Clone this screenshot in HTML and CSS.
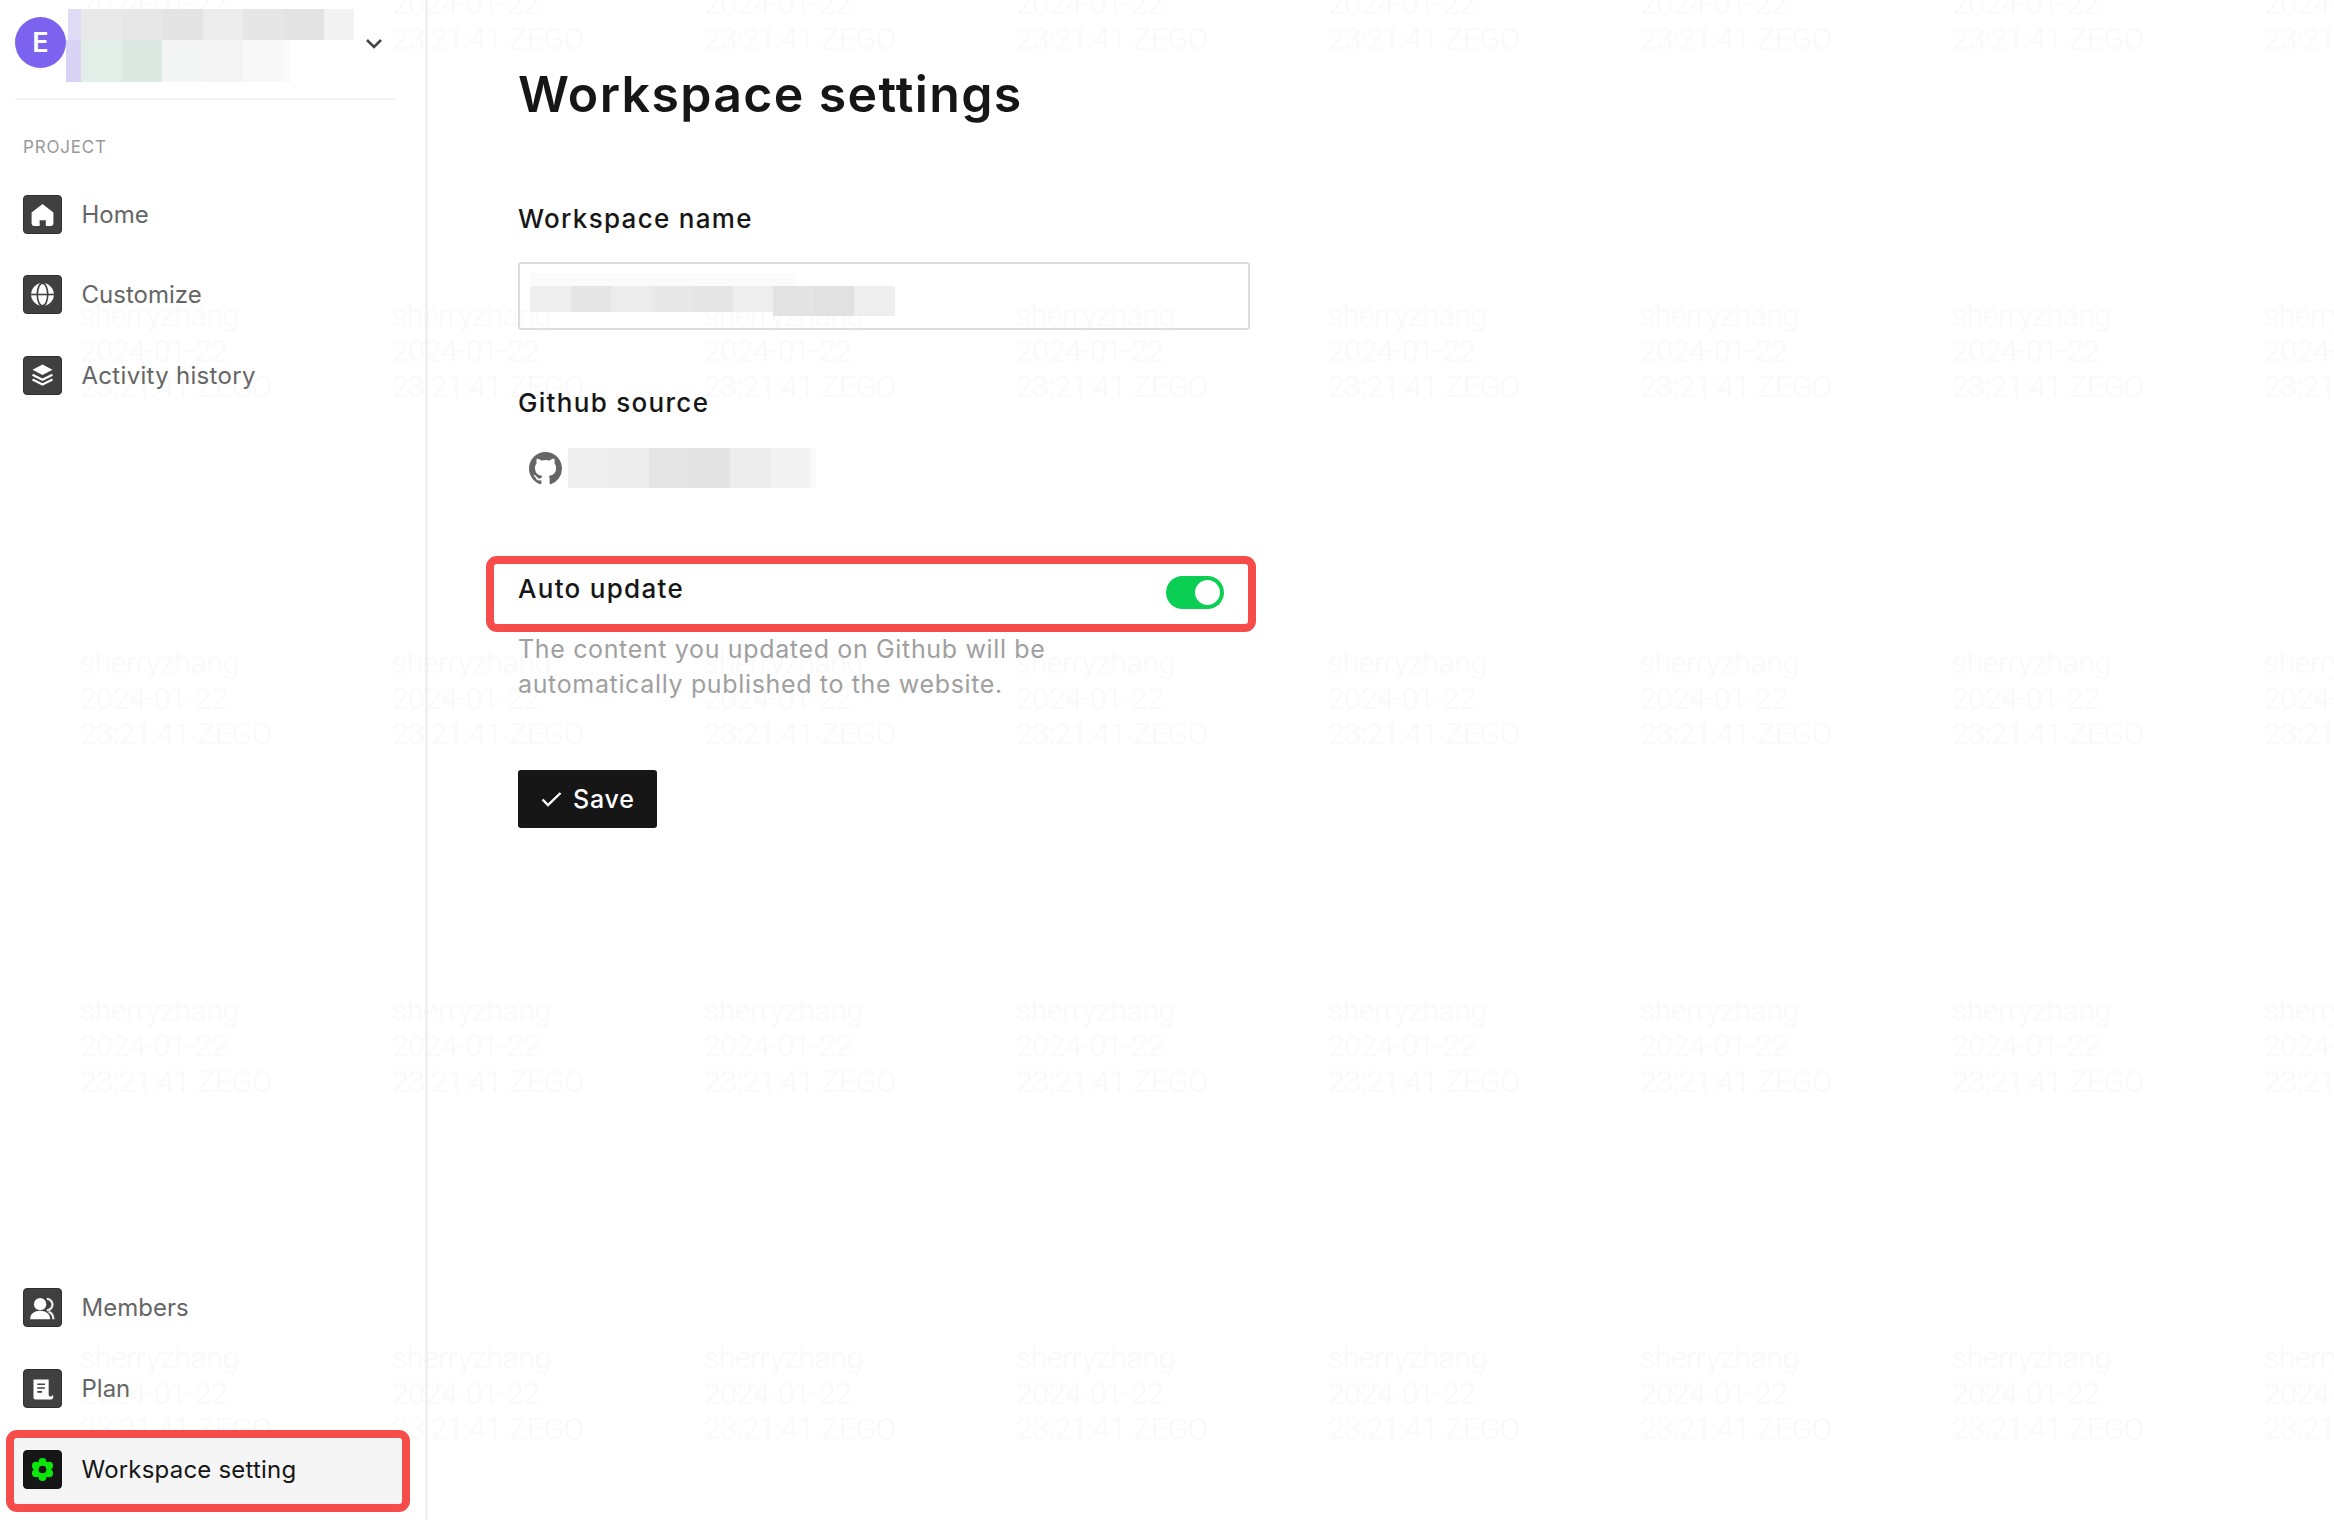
FILE: index.html
```html
<!DOCTYPE html>
<html lang="en">
<head>
<meta charset="utf-8">
<title>Workspace settings</title>
<link rel="stylesheet" href="styles.css">
</head>
<body>
<div class="watermark" aria-hidden="true">
  <div class="wm-grid">
  <div class="wm">sherryzhang<br>2024-01-22<br>23:21:41 ZEGO</div><div class="wm">sherryzhang<br>2024-01-22<br>23:21:41 ZEGO</div><div class="wm">sherryzhang<br>2024-01-22<br>23:21:41 ZEGO</div><div class="wm">sherryzhang<br>2024-01-22<br>23:21:41 ZEGO</div><div class="wm">sherryzhang<br>2024-01-22<br>23:21:41 ZEGO</div><div class="wm">sherryzhang<br>2024-01-22<br>23:21:41 ZEGO</div><div class="wm">sherryzhang<br>2024-01-22<br>23:21:41 ZEGO</div><div class="wm">sherryzhang<br>2024-01-22<br>23:21:41 ZEGO</div>
  <div class="wm">sherryzhang<br>2024-01-22<br>23:21:41 ZEGO</div><div class="wm">sherryzhang<br>2024-01-22<br>23:21:41 ZEGO</div><div class="wm">sherryzhang<br>2024-01-22<br>23:21:41 ZEGO</div><div class="wm">sherryzhang<br>2024-01-22<br>23:21:41 ZEGO</div><div class="wm">sherryzhang<br>2024-01-22<br>23:21:41 ZEGO</div><div class="wm">sherryzhang<br>2024-01-22<br>23:21:41 ZEGO</div><div class="wm">sherryzhang<br>2024-01-22<br>23:21:41 ZEGO</div><div class="wm">sherryzhang<br>2024-01-22<br>23:21:41 ZEGO</div>
  <div class="wm">sherryzhang<br>2024-01-22<br>23:21:41 ZEGO</div><div class="wm">sherryzhang<br>2024-01-22<br>23:21:41 ZEGO</div><div class="wm">sherryzhang<br>2024-01-22<br>23:21:41 ZEGO</div><div class="wm">sherryzhang<br>2024-01-22<br>23:21:41 ZEGO</div><div class="wm">sherryzhang<br>2024-01-22<br>23:21:41 ZEGO</div><div class="wm">sherryzhang<br>2024-01-22<br>23:21:41 ZEGO</div><div class="wm">sherryzhang<br>2024-01-22<br>23:21:41 ZEGO</div><div class="wm">sherryzhang<br>2024-01-22<br>23:21:41 ZEGO</div>
  <div class="wm">sherryzhang<br>2024-01-22<br>23:21:41 ZEGO</div><div class="wm">sherryzhang<br>2024-01-22<br>23:21:41 ZEGO</div><div class="wm">sherryzhang<br>2024-01-22<br>23:21:41 ZEGO</div><div class="wm">sherryzhang<br>2024-01-22<br>23:21:41 ZEGO</div><div class="wm">sherryzhang<br>2024-01-22<br>23:21:41 ZEGO</div><div class="wm">sherryzhang<br>2024-01-22<br>23:21:41 ZEGO</div><div class="wm">sherryzhang<br>2024-01-22<br>23:21:41 ZEGO</div><div class="wm">sherryzhang<br>2024-01-22<br>23:21:41 ZEGO</div>
  <div class="wm">sherryzhang<br>2024-01-22<br>23:21:41 ZEGO</div><div class="wm">sherryzhang<br>2024-01-22<br>23:21:41 ZEGO</div><div class="wm">sherryzhang<br>2024-01-22<br>23:21:41 ZEGO</div><div class="wm">sherryzhang<br>2024-01-22<br>23:21:41 ZEGO</div><div class="wm">sherryzhang<br>2024-01-22<br>23:21:41 ZEGO</div><div class="wm">sherryzhang<br>2024-01-22<br>23:21:41 ZEGO</div><div class="wm">sherryzhang<br>2024-01-22<br>23:21:41 ZEGO</div><div class="wm">sherryzhang<br>2024-01-22<br>23:21:41 ZEGO</div>
  </div>
</div>

<aside class="sidebar">
  <header class="org">
    <span class="avatar">E</span>
    <div class="mosaic org-mosaic">
      <div class="mrow org-row1">
        <i class="cell narrow c-lav1"></i><i class="cell c-e9"></i><i class="cell c-e7"></i><i class="cell c-e4"></i><i class="cell c-ec"></i><i class="cell c-e6"></i><i class="cell c-e3"></i><i class="cell short c-f3"></i>
      </div>
      <div class="mrow org-row2">
        <i class="cell narrow2 c-lav2"></i><i class="cell c-g1"></i><i class="cell c-g2"></i><i class="cell c-g3"></i><i class="cell c-f4"></i><i class="cell c-f8"></i><i class="cell tiny c-fa"></i>
      </div>
    </div>
    <svg class="chevron" viewBox="0 0 18 12"><polyline points="2,2 9,9 16,2"/></svg>
  </header>
  <div class="section-label">PROJECT</div>
  <nav class="nav">
    <a class="nav-item">
      <span class="icon"><svg viewBox="0 0 39 39"><path class="w" d="M19.5 8.5 L31 17.5 V29 a2.5 2.5 0 0 1 -2.5 2.5 H23 V25.5 H16.5 V31.5 H10.5 a2.5 2.5 0 0 1 -2.5 -2.5 V17.5 Z"/></svg></span>
      <span>Home</span>
    </a>
    <a class="nav-item">
      <span class="icon"><svg viewBox="0 0 39 39"><circle class="w" cx="19.5" cy="19.5" r="12"/><ellipse class="d" cx="19.5" cy="19.5" rx="5.5" ry="12"/><path class="d" d="M7.5 19.5 H31.5"/></svg></span>
      <span>Customize</span>
    </a>
    <a class="nav-item">
      <span class="icon"><svg viewBox="0 0 39 39"><path class="w" d="M19.5 8 L30 13.5 L19.5 19 L9 13.5 Z"/><polyline class="l" points="9,18.7 19.5,24 30,18.7"/><polyline class="l" points="9,23.7 19.5,29 30,23.7"/></svg></span>
      <span class="tracked">Activity history</span>
    </a>
  </nav>
  <nav class="nav nav-bottom">
    <a class="nav-item">
      <span class="icon"><svg viewBox="0 0 39 39"><path class="l2" d="M24 10.5 a6 6 0 0 1 0 12 M26 24 c3 1.2 5 4 5 8"/><circle class="w" cx="17" cy="16" r="6.5"/><path class="w" d="M6.5 32 c0 -6 4.5 -9 10.5 -9 s10.5 3 10.5 9 Z"/></svg></span>
      <span>Members</span>
    </a>
    <a class="nav-item">
      <span class="icon"><svg viewBox="0 0 39 39"><path class="w" d="M10 10 H26 V26 a2 2 0 0 0 4 0 a3 3 0 0 1 -1 5 H12 a2 2 0 0 1 -2 -2 Z"/><path class="d" d="M14 15 H22 M14 19 H22 M14 23 H19"/></svg></span>
      <span>Plan</span>
    </a>
    <a class="nav-item nav-active">
      <span class="icon icon-active"><svg viewBox="0 0 39 39"><g class="gear"><circle cx="19.5" cy="19.5" r="9"/><circle cx="19.5" cy="11.5" r="4.2"/><circle cx="19.5" cy="27.5" r="4.2"/><circle cx="12.6" cy="15.5" r="4.2"/><circle cx="26.4" cy="15.5" r="4.2"/><circle cx="12.6" cy="23.5" r="4.2"/><circle cx="26.4" cy="23.5" r="4.2"/></g><circle class="hole" cx="19.5" cy="19.5" r="4"/></svg></span>
      <span>Workspace setting</span>
    </a>
  </nav>
</aside>

<main class="main">
  <h1 class="title">Workspace settings</h1>
  <div class="label label-name">Workspace name</div>
  <div class="input">
    <div class="mrow input-row1"><i class="input-faint"></i></div>
    <div class="mosaic mrow input-row2">
      <i class="cell c-ef"></i><i class="cell c-e6"></i><i class="cell c-ec"></i><i class="cell c-e8"></i><i class="cell c-e5"></i><i class="cell c-ee"></i><i class="cell tall c-e3"></i><i class="cell tall c-e1"></i><i class="cell tall c-ee"></i>
    </div>
  </div>
  <div class="label label-source">Github source</div>
  <div class="source">
    <svg class="github" viewBox="0 0 16 16"><path d="M8 0C3.58 0 0 3.58 0 8c0 3.54 2.29 6.53 5.47 7.59.4.07.55-.17.55-.38 0-.19-.01-.82-.01-1.49-2.01.37-2.53-.49-2.69-.94-.09-.23-.48-.94-.82-1.13-.28-.15-.68-.52-.01-.53.63-.01 1.08.58 1.23.82.72 1.21 1.87.87 2.33.66.07-.52.28-.87.51-1.07-1.78-.2-3.64-.89-3.64-3.95 0-.87.31-1.59.82-2.15-.08-.2-.36-1.02.08-2.12 0 0 .67-.21 2.2.82.64-.18 1.32-.27 2-.27s1.36.09 2 .27c1.53-1.04 2.2-.82 2.2-.82.44 1.1.16 1.92.08 2.12.51.56.82 1.27.82 2.15 0 3.07-1.87 3.75-3.65 3.95.29.25.54.73.54 1.48 0 1.07-.01 1.93-.01 2.2 0 .21.15.46.55.38A8.01 8.01 0 0 0 16 8c0-4.42-3.58-8-8-8z"/></svg>
    <div class="mosaic mrow source-row">
      <i class="cell c-ee"></i><i class="cell c-ed"></i><i class="cell c-e5"></i><i class="cell c-e4"></i><i class="cell c-ec"></i><i class="cell c-f3"></i><i class="cell sliver c-fa"></i>
    </div>
  </div>
  <div class="auto-box">
    <span class="label">Auto update</span>
    <span class="toggle"><span class="knob"></span></span>
  </div>
  <p class="desc">The content you updated on Github will be<br>automatically published to the website.</p>
  <button class="save" type="button">
    <svg class="check" viewBox="0 0 21 16"><polyline points="1.5,8.5 7,14 19.5,2"/></svg>
    <span>Save</span>
  </button>
</main>
</body>
</html>
```
FILE: styles.css
```css
* { box-sizing: border-box; }
html, body { margin: 0; height: 100%; }
body {
  position: relative;
  display: flex;
  width: 2334px;
  height: 1520px;
  overflow: hidden;
  background: #fff;
  color: #161616;
  font-family: Inter, "Noto Sans", sans-serif;
}

/* Sidebar */
.sidebar {
  position: relative;
  display: flex;
  flex-direction: column;
  flex: 0 0 428px;
  height: 100%;
  padding-bottom: 8px;
  border-right: 3px solid #f1f1f1;
}
.org {
  display: flex;
  align-items: flex-start;
  height: 100px;
  margin: 0 30px 0 15px;
  border-bottom: 2px solid #f3f3f3;
}
.avatar {
  display: flex;
  align-items: center;
  justify-content: center;
  flex: 0 0 51px;
  height: 51px;
  margin-top: 17px;
  border-radius: 50%;
  background: #7b63ef;
  color: #fff;
  font-size: 27px;
  font-weight: 600;
}
.org-mosaic { margin-top: 9px; }
.chevron {
  width: 18px;
  height: 12px;
  margin: 38px 12px 0 auto;
  fill: none;
  stroke: #444;
  stroke-width: 2.6;
}
.mosaic { filter: blur(0.7px); }
.mrow { display: flex; }
.cell { display: block; flex: 0 0 40.5px; }
.org-row1 { height: 31px; margin-left: 2px; }
.org-row2 { height: 42px; }
.narrow { flex-basis: 13px; }
.narrow2 { flex-basis: 15px; }
.short { flex-basis: 30px; }
.tiny { flex-basis: 7px; }
.sliver { flex-basis: 5px; }
.c-lav1 { background: #e0dcf8; }
.c-lav2 { background: #d9d4f6; }
.c-g1 { background: #e4eee8; }
.c-g2 { background: #dce9e2; }
.c-g3 { background: #f3f6f4; }
.c-e1 { background: #e1e1e1; }
.c-e3 { background: #e3e3e3; }
.c-e4 { background: #e4e4e4; }
.c-e5 { background: #e5e5e5; }
.c-e6 { background: #e6e6e6; }
.c-e7 { background: #e7e7e7; }
.c-e8 { background: #e8e8e8; }
.c-e9 { background: #e9e9e9; }
.c-ec { background: #ececec; }
.c-ed { background: #ededed; }
.c-ee { background: #eeeeee; }
.c-ef { background: #efefef; }
.c-f3 { background: #f3f3f3; }
.c-f4 { background: #f4f4f4; }
.c-f8 { background: #f8f8f8; }
.c-fa { background: #fafafa; }

.section-label {
  margin: 37px 0 17px 23px;
  color: #999;
  font-size: 17px;
  line-height: 20px;
  letter-spacing: 0.8px;
}
.nav { display: flex; flex-direction: column; }
.nav-bottom { margin-top: auto; }
.nav-item {
  display: flex;
  align-items: center;
  gap: 19.5px;
  height: 80.5px;
  padding-left: 23px;
  color: #666;
  font-size: 24px;
}
.tracked { letter-spacing: 0.3px; }
.nav-active {
  height: 82px;
  margin: 1.5px 15px 0 6px;
  padding: 0 0 4px 9px;
  border: 8px solid #f64c4a;
  border-radius: 11px;
  background: #f5f5f5;
  color: #161616;
  letter-spacing: 0.2px;
}
.icon {
  flex: 0 0 39px;
  height: 39px;
  border: 1px solid #2e2e2e;
  border-radius: 4px;
  background: #404040;
}
.icon svg { display: block; width: 37px; height: 37px; }
.icon-active { background: #161616; border-color: #111; }
.w { fill: #fff; }
.d { fill: none; stroke: #404040; stroke-width: 1.7; }
.l { fill: none; stroke: #fff; stroke-width: 2.2; }
.l2 { fill: none; stroke: #e8e8e8; stroke-width: 2.4; }
.gear { fill: #0be60b; }
.hole { fill: #161616; }

/* Main */
.main { position: relative; flex: 1; padding-left: 90px; }
.title {
  margin: 66px 0 0;
  font-size: 50px;
  line-height: 56px;
  font-weight: 600;
  letter-spacing: 1.35px;
}
.label {
  font-size: 26px;
  line-height: 30px;
  font-weight: 500;
  letter-spacing: 1.3px;
}
.label-name { margin-top: 82px; }
.label-source { margin-top: 58px; }
.input {
  width: 732px;
  height: 68px;
  margin-top: 28px;
  padding: 9px 0 0 10px;
  border: 2px solid #dcdcdc;
  border-radius: 3px;
}
.input-row1 { height: 13px; }
.input-faint { display: block; width: 265px; background: #fbfbfb; }
.input-row2 { height: 26px; align-items: flex-start; }
.input-row2 .cell { height: 26px; }
.input-row2 .tall { height: 30px; }
.source {
  display: flex;
  align-items: center;
  gap: 6px;
  height: 40px;
  margin-top: 30px;
  padding-left: 11px;
}
.github { width: 33px; height: 33px; fill: #666; }
.source-row { height: 40px; }
.auto-box {
  display: flex;
  align-items: flex-start;
  justify-content: space-between;
  width: 770px;
  height: 76px;
  margin: 68px 0 0 -32px;
  padding: 10px 24px 0;
  border: 8px solid #f64c4a;
  border-radius: 11px;
}
.toggle {
  display: flex;
  align-items: center;
  justify-content: flex-end;
  width: 58px;
  height: 33px;
  margin-top: 2px;
  padding-right: 4px;
  border-radius: 17px;
  background: #0bcf52;
}
.knob { width: 25px; height: 25px; border-radius: 50%; background: #fff; }
.desc {
  margin: 0;
  color: #a0a0a0;
  font-size: 25px;
  line-height: 35px;
  letter-spacing: 0.65px;
}
.save {
  display: flex;
  align-items: center;
  gap: 11px;
  width: 139px;
  height: 58px;
  margin-top: 68px;
  padding: 0 0 0 23px;
  border: 0;
  border-radius: 3px;
  background: #161616;
  color: #fff;
  font-family: inherit;
  font-size: 25px;
  font-weight: 500;
  letter-spacing: 0.8px;
}
.check { width: 21px; height: 16px; fill: none; stroke: #fff; stroke-width: 2.4; }

/* Watermark overlay, clipped to the page and painted under the content */
.watermark {
  position: absolute;
  inset: 0;
  overflow: hidden;
  pointer-events: none;
}
.wm-grid {
  display: grid;
  grid-template-columns: repeat(8, 312px);
  grid-auto-rows: 347.5px;
  margin: -50px 0 0 80px;
  color: #f9f9f9;
  font-family: Roboto, sans-serif;
  font-size: 30px;
  font-weight: 300;
  line-height: 35.5px;
  letter-spacing: -0.3px;
  white-space: nowrap;
}
```
